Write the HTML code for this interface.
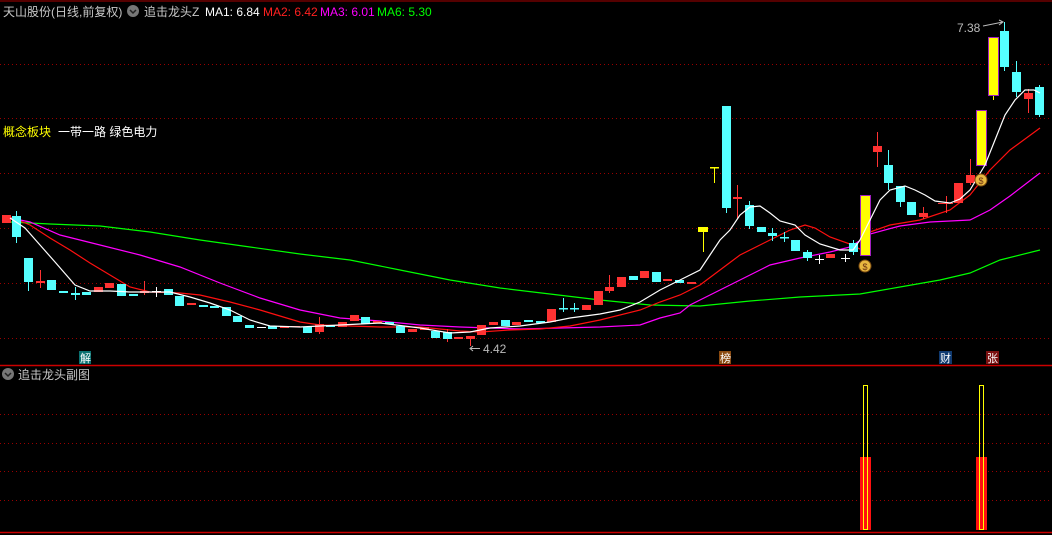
<!DOCTYPE html>
<html><head><meta charset="utf-8"><style>
html,body{margin:0;padding:0;background:#000;width:1052px;height:535px;overflow:hidden}
svg{display:block}
text{font-family:"Liberation Sans","Noto Sans CJK SC",sans-serif;font-size:12px}
</style></head><body>
<svg width="1052" height="535" viewBox="0 0 1052 535" xmlns="http://www.w3.org/2000/svg">
<rect width="1052" height="535" fill="#000"/>
<line x1="0" y1="1" x2="1052" y2="1" stroke="#a00" stroke-width="1"/>
<g stroke="#900" stroke-width="1" stroke-dasharray="1 3">
<line x1="0" y1="64.5" x2="1052" y2="64.5"/>
<line x1="0" y1="118.5" x2="1052" y2="118.5"/>
<line x1="0" y1="173.5" x2="1052" y2="173.5"/>
<line x1="0" y1="228.5" x2="1052" y2="228.5"/>
<line x1="0" y1="283.5" x2="1052" y2="283.5"/>
<line x1="0" y1="338.5" x2="1052" y2="338.5"/>
<line x1="0" y1="414.5" x2="1052" y2="414.5"/>
<line x1="0" y1="443.5" x2="1052" y2="443.5"/>
<line x1="0" y1="471.5" x2="1052" y2="471.5"/>
<line x1="0" y1="500.5" x2="1052" y2="500.5"/>
</g>
<line x1="0" y1="365.5" x2="1052" y2="365.5" stroke="#c00" stroke-width="1.5"/>
<line x1="0" y1="532.5" x2="1052" y2="532.5" stroke="#c00" stroke-width="1.5"/>

<polyline fill="none" stroke="#00ff00" stroke-width="1.2" points="10,222 50,224 100,226 150,232 200,240 250,247 300,254 350,260 400,270 450,280 500,288 550,294 600,300 650,305 700,306 750,301 800,297 860,294 900,287 940,280 970,273 1000,260 1040,250"/>
<polyline fill="none" stroke="#ff00ff" stroke-width="1.2" points="10,218 30,222 60,235 100,245 140,255 180,267 220,283 260,298 300,310 340,318 380,321 420,325 460,327 520,329 560,328 600,327 640,325 660,318 680,313 690,305 710,295 740,280 770,265 800,258 830,252 850,247 870,234 900,226 930,222 970,220 990,210 1010,196 1040,173"/>
<polyline fill="none" stroke="#ff1010" stroke-width="1.2" points="10,217 30,225 50,238 70,250 90,263 110,275 130,287 150,292 180,293 200,295 230,302 260,310 280,316 300,322 320,325 350,326 380,327 420,327 460,331 480,332 510,330 540,329 570,326 600,320 640,310 660,302 680,295 700,285 720,270 740,255 760,245 790,230 805,225 815,228 830,237 850,244 862,250 870,232 890,225 920,220 950,210 970,195 990,170 1010,150 1040,128"/>

<g stroke-width="1">
<line x1="16.5" y1="211" x2="16.5" y2="243" stroke="#55ffff"/>
<line x1="28.5" y1="258" x2="28.5" y2="291" stroke="#55ffff"/>
<line x1="40.5" y1="270" x2="40.5" y2="288" stroke="#ff3232"/>
<line x1="75.5" y1="287" x2="75.5" y2="300" stroke="#55ffff"/>
<line x1="144.5" y1="281" x2="144.5" y2="295" stroke="#ff3232"/>
<line x1="156.5" y1="287" x2="156.5" y2="297" stroke="#fff"/>
<line x1="319.5" y1="317" x2="319.5" y2="334" stroke="#ff3232"/>
<line x1="447.5" y1="329" x2="447.5" y2="342" stroke="#ff3232"/>
<line x1="470.5" y1="336" x2="470.5" y2="346" stroke="#ff3232"/>
<line x1="563.5" y1="298" x2="563.5" y2="312" stroke="#55ffff"/>
<line x1="574.5" y1="303" x2="574.5" y2="312" stroke="#55ffff"/>
<line x1="609.5" y1="275" x2="609.5" y2="293" stroke="#ff3232"/>
<line x1="703.5" y1="232" x2="703.5" y2="252" stroke="#ffff00"/>
<line x1="714.5" y1="167" x2="714.5" y2="183" stroke="#ffff00"/>
<line x1="726.5" y1="106" x2="726.5" y2="213" stroke="#55ffff"/>
<line x1="737.5" y1="185" x2="737.5" y2="219" stroke="#ff3232"/>
<line x1="749.5" y1="201" x2="749.5" y2="229" stroke="#55ffff"/>
<line x1="772.5" y1="228" x2="772.5" y2="241" stroke="#55ffff"/>
<line x1="784.5" y1="232" x2="784.5" y2="242" stroke="#55ffff"/>
<line x1="807.5" y1="250" x2="807.5" y2="261" stroke="#55ffff"/>
<line x1="819.5" y1="255" x2="819.5" y2="264" stroke="#fff"/>
<line x1="845.5" y1="254" x2="845.5" y2="262" stroke="#fff"/>
<line x1="853.5" y1="240" x2="853.5" y2="255" stroke="#55ffff"/>
<line x1="877.5" y1="132" x2="877.5" y2="167" stroke="#ff3232"/>
<line x1="888.5" y1="150" x2="888.5" y2="190" stroke="#55ffff"/>
<line x1="900.5" y1="186" x2="900.5" y2="207" stroke="#55ffff"/>
<line x1="923.5" y1="207" x2="923.5" y2="219" stroke="#ff3232"/>
<line x1="946.5" y1="196" x2="946.5" y2="213" stroke="#ff3232"/>
<line x1="970.5" y1="159" x2="970.5" y2="185" stroke="#ff3232"/>
<line x1="993.5" y1="95" x2="993.5" y2="100" stroke="#ffff00"/>
<line x1="1004.5" y1="22" x2="1004.5" y2="71" stroke="#55ffff"/>
<line x1="1016.5" y1="61" x2="1016.5" y2="97" stroke="#55ffff"/>
<line x1="1028.5" y1="89" x2="1028.5" y2="113" stroke="#ff3232"/>
<line x1="1039.5" y1="85" x2="1039.5" y2="117" stroke="#55ffff"/>
</g>
<g fill="#ff3232">
<rect x="2" y="215" width="9" height="8"/>
<rect x="36" y="281" width="9" height="2"/>
<rect x="94" y="287" width="9" height="5"/>
<rect x="105" y="283" width="9" height="5"/>
<rect x="140" y="291" width="9" height="2"/>
<rect x="187" y="303" width="9" height="2"/>
<rect x="280" y="327" width="9" height="1"/>
<rect x="291" y="326" width="9" height="1"/>
<rect x="315" y="324" width="9" height="8"/>
<rect x="338" y="322" width="9" height="5"/>
<rect x="350" y="315" width="9" height="6"/>
<rect x="373" y="321" width="9" height="2"/>
<rect x="408" y="329" width="9" height="3"/>
<rect x="420" y="327" width="9" height="3"/>
<rect x="454" y="337" width="9" height="2"/>
<rect x="466" y="336" width="9" height="3"/>
<rect x="477" y="325" width="9" height="10"/>
<rect x="489" y="322" width="9" height="3"/>
<rect x="512" y="322" width="9" height="3"/>
<rect x="547" y="309" width="9" height="13"/>
<rect x="582" y="305" width="9" height="5"/>
<rect x="594" y="291" width="9" height="14"/>
<rect x="605" y="287" width="9" height="4"/>
<rect x="617" y="277" width="9" height="10"/>
<rect x="640" y="271" width="9" height="7"/>
<rect x="663" y="279" width="9" height="2"/>
<rect x="687" y="282" width="9" height="2"/>
<rect x="733" y="197" width="9" height="2"/>
<rect x="826" y="254" width="9" height="4"/>
<rect x="873" y="146" width="9" height="6"/>
<rect x="919" y="213" width="9" height="4"/>
<rect x="938" y="203" width="15" height="1"/>
<rect x="954" y="183" width="9" height="20"/>
<rect x="966" y="175" width="9" height="8"/>
<rect x="1024" y="93" width="9" height="6"/>
</g>
<g fill="#55ffff">
<rect x="12" y="216" width="9" height="21"/>
<rect x="24" y="258" width="9" height="24"/>
<rect x="47" y="280" width="9" height="10"/>
<rect x="59" y="291" width="9" height="2"/>
<rect x="71" y="293" width="9" height="2"/>
<rect x="82" y="292" width="9" height="3"/>
<rect x="117" y="284" width="9" height="12"/>
<rect x="129" y="294" width="9" height="2"/>
<rect x="164" y="289" width="9" height="6"/>
<rect x="175" y="296" width="9" height="10"/>
<rect x="199" y="305" width="9" height="2"/>
<rect x="210" y="306" width="9" height="2"/>
<rect x="222" y="307" width="9" height="9"/>
<rect x="233" y="316" width="9" height="6"/>
<rect x="245" y="325" width="9" height="3"/>
<rect x="268" y="326" width="9" height="3"/>
<rect x="303" y="327" width="9" height="6"/>
<rect x="326" y="325" width="9" height="2"/>
<rect x="361" y="317" width="9" height="7"/>
<rect x="385" y="322" width="9" height="2"/>
<rect x="396" y="326" width="9" height="7"/>
<rect x="431" y="331" width="9" height="7"/>
<rect x="443" y="332" width="9" height="7"/>
<rect x="501" y="320" width="9" height="6"/>
<rect x="524" y="320" width="9" height="2"/>
<rect x="536" y="321" width="9" height="2"/>
<rect x="559" y="308" width="9" height="1.5"/>
<rect x="570" y="308" width="9" height="1.5"/>
<rect x="629" y="276" width="9" height="4"/>
<rect x="652" y="272" width="9" height="10"/>
<rect x="675" y="280" width="9" height="3"/>
<rect x="722" y="106" width="9" height="102"/>
<rect x="745" y="205" width="9" height="21"/>
<rect x="757" y="227" width="9" height="5"/>
<rect x="768" y="233" width="9" height="3"/>
<rect x="780" y="237" width="9" height="1.5"/>
<rect x="791" y="240" width="9" height="11"/>
<rect x="803" y="252" width="9" height="6"/>
<rect x="849" y="243" width="9" height="9"/>
<rect x="884" y="165" width="9" height="18"/>
<rect x="896" y="186" width="9" height="16"/>
<rect x="907" y="202" width="9" height="13"/>
<rect x="1000" y="31" width="9" height="36"/>
<rect x="1012" y="72" width="9" height="20"/>
<rect x="1035" y="87" width="9" height="28"/>
</g>
<g fill="#fff">
<rect x="152" y="291" width="9" height="1"/>
<rect x="257" y="327" width="9" height="1"/>
<rect x="815" y="259" width="9" height="1"/>
<rect x="841" y="258" width="9" height="1"/>
</g>
<g fill="#ffff00">
<rect x="698" y="227" width="10" height="5"/>
<rect x="710" y="167" width="9" height="1.5"/>
</g>
<rect x="860.5" y="195.5" width="10" height="60" fill="#ffff00" stroke="#a020c0" stroke-width="1"/>
<rect x="976.5" y="110.5" width="10" height="55" fill="#ffff00" stroke="#a020c0" stroke-width="1"/>
<rect x="988.5" y="37.5" width="10" height="58" fill="#ffff00" stroke="#a020c0" stroke-width="1"/>

<polyline fill="none" stroke="#fff" stroke-width="1.2" points="10,218 25,228 40,245 55,262 75,285 90,291 110,291 130,292 150,292 170,292 190,297 210,303 230,310 250,320 270,326 300,327 340,325 380,323 420,328 450,333 470,332 490,328 520,326 550,322 570,318 600,314 620,310 640,302 660,290 680,280 700,270 710,255 720,240 730,230 740,215 750,207 760,206 770,213 780,221 795,225 805,235 820,244 840,250 853,250 860,240 870,220 880,200 890,190 905,186 915,190 925,195 935,201 950,203 960,199 970,190 985,165 995,140 1005,115 1015,100 1025,90 1034,90 1040,93"/>

<circle cx="865" cy="266" r="6" fill="#e8b840" stroke="#7a4a10"/>
<text x="865" y="270" text-anchor="middle" style="font-size:9px" fill="#6a3010">$</text>
<circle cx="981" cy="180" r="6" fill="#e8b840" stroke="#7a4a10"/>
<text x="981" y="184" text-anchor="middle" style="font-size:9px" fill="#6a3010">$</text>

<line x1="470" y1="348.5" x2="480" y2="348.5" stroke="#bbb"/>
<path d="M473 346 L470 348.5 L473 351" fill="none" stroke="#bbb"/>
<text x="483" y="353" fill="#bbb">4.42</text>
<text x="957" y="32" fill="#bbb">7.38</text>
<path d="M983 26 L1003 22 M999 20 L1003 22 L999 25" fill="none" stroke="#bbb"/>

<rect x="79" y="351" width="12" height="13" fill="#0a7070"/>
<text x="80" y="362" fill="#fff" style="font-size:11px">解</text>
<rect x="719" y="351" width="12" height="13" fill="#8a4a10"/>
<text x="720" y="362" fill="#fff" style="font-size:11px">榜</text>
<rect x="939" y="351" width="13" height="13" fill="#103a70"/>
<text x="940" y="362" fill="#fff" style="font-size:11px">财</text>
<rect x="986" y="351" width="13" height="13" fill="#7a1010"/>
<text x="987" y="362" fill="#fff" style="font-size:11px">张</text>

<text x="3" y="16" fill="#c8c8c8">天山股份(日线,前复权)</text>
<circle cx="133" cy="11" r="6" fill="#777"/>
<path d="M130 10 L133 13 L136 10" fill="none" stroke="#222" stroke-width="1.5"/>
<text x="144" y="16" fill="#c8c8c8">追击龙头Z</text>
<text x="205" y="16" fill="#fff">MA1: 6.84</text>
<text x="263" y="16" fill="#ff2020">MA2: 6.42</text>
<text x="320" y="16" fill="#ff00ff">MA3: 6.01</text>
<text x="377" y="16" fill="#00ff00">MA6: 5.30</text>

<text x="3" y="136" fill="#ffff00">概念板块</text>
<text x="58" y="136" fill="#fff">一带一路 绿色电力</text>

<circle cx="8" cy="374" r="6" fill="#777"/>
<path d="M5 373 L8 376 L11 373" fill="none" stroke="#222" stroke-width="1.5"/>
<text x="18" y="379" fill="#c8c8c8">追击龙头副图</text>

<rect x="860" y="457" width="11" height="73" fill="#ff1010"/>
<rect x="863.5" y="385.5" width="4" height="144" fill="none" stroke="#ffff00" stroke-width="1"/>
<rect x="976" y="457" width="11" height="73" fill="#ff1010"/>
<rect x="979.5" y="385.5" width="4" height="144" fill="none" stroke="#ffff00" stroke-width="1"/>
</svg>
</body></html>
